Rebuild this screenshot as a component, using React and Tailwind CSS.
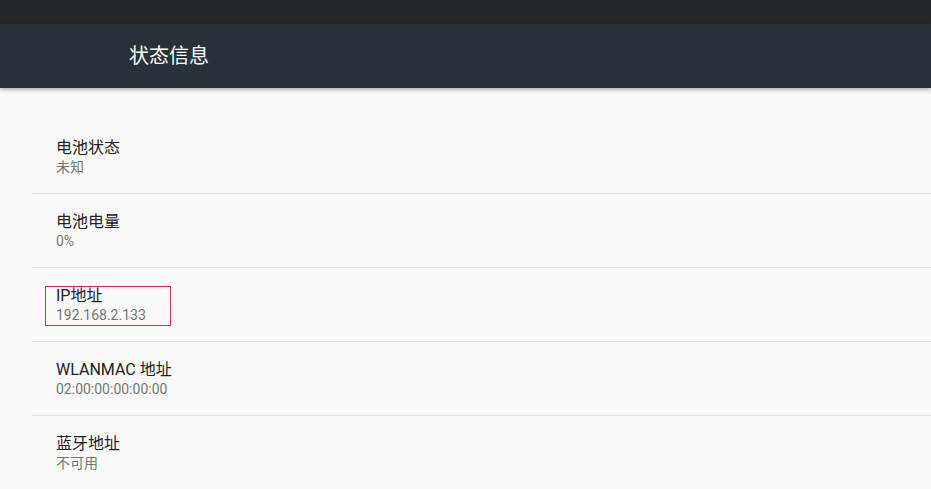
import React from "react";

const rows = [
  { t: "电池状态", s: "未知" },
  { t: "电池电量", s: "0%" },
  { t: "IP地址", s: "192.168.2.133", box: true },
  { t: "WLANMAC 地址", s: "02:00:00:00:00:00" },
  { t: "蓝牙地址", s: "不可用" },
];

export default function App() {
  return (
    <div
      className="w-[931px] h-[489px] overflow-hidden bg-[#fafafa] flex flex-col"
      style={{ fontFamily: 'Roboto, "Noto Sans CJK SC", sans-serif' }}
    >
      <div className="h-[24px] bg-[#232629] shrink-0" />
      <div className="h-[64px] bg-[#263238] shrink-0 flex items-center pl-[129px] relative z-10 shadow-[0_2px_4px_rgba(0,0,0,0.3)]">
        <span className="text-white text-[20px] leading-none">状态信息</span>
      </div>
      <div className="pt-[32px] pl-[32px]">
        {rows.map((r, i) => (
          <div key={i} className="h-[74px] border-b border-[#e0e0e0] flex flex-col pt-[18px] pl-[24px] relative">
            <div className="text-[16px] leading-[20px] text-[#212121]">{r.t}</div>
            <div className="text-[14px] leading-[18px] text-[#757575]">{r.s}</div>
            {r.box && (
              <div className="absolute left-[13px] top-[18px] w-[126px] h-[40px] border border-[#d2334a]" />
            )}
          </div>
        ))}
      </div>
    </div>
  );
}
